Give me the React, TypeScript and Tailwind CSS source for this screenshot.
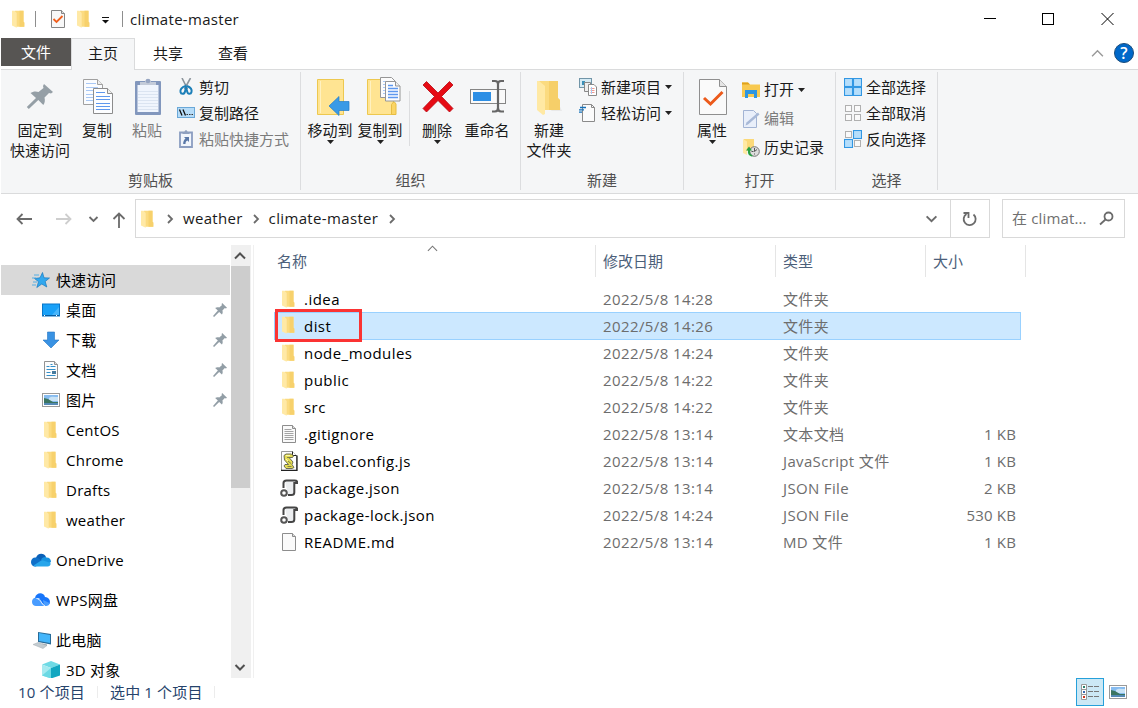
import type { ReactNode } from "react";
import clsx from "clsx";

// -------- ICONS --------

function FolderIcon() {
  return (
    <svg width="18" height="18" viewBox="0 0 18 18">
      <path d="M5 .8h8.500v11l.8.800v4.200H5z" fill="#fbdb80" />
      <path d="M9.500.8h4v11l.8.800v4.200H9.500z" fill="#f7d16c" />
      <path d="M2 .8h2.500l2.200 2.200v14.800L2 15.600z" fill="#ffe9a6" />
    </svg>
  );
}

function PinIcon({ size = 14 }: { size?: number }) {
  return (
    <svg width={size} height={size} viewBox="0 0 26 26">
      <path
        d="M17 0l9 9-2 1-2-.5-4.500 4.500c1 3 .5 5.500-1 7.500l-5-5L2 26l-2-2L9 14 4 9.500c2-1.500 5-2 7.500-1L16.500 4 16 2z"
        fill="#929ea6"
      />
    </svg>
  );
}

function BigPinIcon() {
  return (
    <svg width="40" height="38" viewBox="0 0 40 38">
      <path
        d="M24 6l9 8-2 1.500-2-.5-4.500 4.500c.8 3 .3 5.500-1.200 7.500l-5-5-9.500 9-2-2L16 20l-5.500-5c2-1.500 5.500-2 8-1L23.500 10 23 8z"
        fill="#959fa6"
      />
    </svg>
  );
}

function CopyIcon() {
  return (
    <svg width="40" height="38" viewBox="0 0 40 38">
      <path d="M6.500 1.500h14l5 5v20h-19z" fill="#fafcff" stroke="#a0a0a0" />
      <path d="M20.500 1.500v5h5" fill="#eee" stroke="#a0a0a0" />
      <path d="M9 5.500h10M9 9.500h12M9 12.500h12M9 16.500h12M9 19.500h12M9 22.500h12" stroke="#a9c8f5" />
      <path d="M16.500 10.500h14l5 5v20h-19z" fill="#fcfdff" stroke="#8c8c8c" />
      <path d="M30.500 10.500v5h5" fill="#eee" stroke="#8c8c8c" />
      <path d="M19 14.500h9M19 18.500h14M19 21.500h14M19 25.500h14M19 28.500h14M19 31.500h14" stroke="#5e98ee" strokeWidth="1.200" />
    </svg>
  );
}

function PasteIcon() {
  return (
    <svg width="40" height="38" viewBox="0 0 40 38">
      <rect x="8" y="3" width="26" height="34" rx="1" fill="#8297bd" />
      <rect x="10.500" y="7" width="21" height="27" fill="#f0f5fd" />
      <path d="M11 13.500h20M11 16.500h20M11 19.500h20M11 22.500h20M11 25.500h20M11 28.500h20M11 31.500h20" stroke="#dbe4f1" />
      <path d="M13 7V4h5c0-4 6-4 6 0h5v3z" fill="#c3cbd9" />
      <circle cx="21" cy="3" r="2.300" fill="#96a5c2" />
    </svg>
  );
}

function MoveToIcon() {
  return (
    <svg width="40" height="38" viewBox="0 0 40 38">
      <path d="M7.500 1.500h26v35h-26z" fill="#ffe492" stroke="#edc84f" />
      <path d="M10.500 3v32" stroke="#fff1c0" />
      <path d="M19 28l10-9.500v5h10v9H29v5z" fill="#3a9ae6" stroke="#227cc8" strokeWidth=".7" />
    </svg>
  );
}

function CopyToIcon() {
  return (
    <svg className="overflow-visible" width="40" height="38" viewBox="0 0 40 38">
      <path d="M7.500 1.500h26v35h-26z" fill="#ffe492" stroke="#edc84f" />
      <path d="M10.500 3v32" stroke="#fff1c0" />
      <path d="M31.500 36.500v-10l2-2.500h1l1.500 2v10.500z" fill="#fbd565" stroke="#e6bd43" />
      <path d="M20.500-.5h11l4 4v16h-15z" fill="#fcfcfc" stroke="#969696" />
      <path d="M23 3.500h5M23 6.500h4M23 9.500h4M23 12.500h4M23 15.500h4" stroke="#a9c8f5" />
      <path d="M25.500 3.500h10l4.500 4.500v15h-14.500z" fill="#fcfdff" stroke="#969696" />
      <path d="M35.500 3.500v4.500h4.500" fill="#eee" stroke="#969696" />
      <path d="M28 7.500h5M28 10.500h10M28 13.500h10M28 16.500h10M28 19.500h10" stroke="#5e98ee" strokeWidth="1.300" />
    </svg>
  );
}

function DeleteIcon() {
  return (
    <svg width="40" height="38" viewBox="0 0 40 38">
      <path
        d="M9.500 3.500l11.500 11.500 11.500-11.500 3.500 3.500L24.500 18.500 36 30.500 32.500 34 21 22.500 9.500 34 6 30.500 17.500 18.500 6 7z"
        fill="#e60b14"
        stroke="#b80710"
        strokeWidth=".8"
      />
    </svg>
  );
}

function RenameIcon() {
  return (
    <svg width="40" height="38" viewBox="0 0 40 38">
      <rect x="3.500" y="11.500" width="35" height="14" fill="#fafafa" stroke="#858585" />
      <rect x="6" y="14" width="18" height="9" fill="#2d8fe5" />
      <path
        d="M25 3h3c2 0 3 1.500 3 3v24c0 2-1 3.500-3 3.500h-3M37 3h-3c-2 0-3 1.500-3 3v24c0 2 1 3.500 3 3.500h3"
        fill="none"
        stroke="#666"
        strokeWidth="2.200"
      />
    </svg>
  );
}

function NewFolderIcon() {
  return (
    <svg width="40" height="38" viewBox="0 0 40 38">
      <path d="M28 22l5 11H22z" fill="#e9e9e9" />
      <path d="M10 3h19v17l2 2v10H14z" fill="#fbdb80" />
      <path d="M20 3h9v17l2 2v10H20z" fill="#f4cb62" opacity=".75" />
      <path d="M8 3h2l6 5v28l-2 1-6-5z" fill="#ffe9a4" />
    </svg>
  );
}

function PropertiesIcon() {
  return (
    <svg width="40" height="38" viewBox="0 0 40 38">
      <path d="M7.500 1.500h20l7 7v28h-27z" fill="#fafafa" stroke="#8f8f8f" />
      <path d="M27.500 1.500v7h7" fill="#e5e5e5" stroke="#8f8f8f" />
      <path d="M12 20l6.500 6L30.500 14" fill="none" stroke="#ec5a1b" strokeWidth="3" />
    </svg>
  );
}

function CheckedPageIcon() {
  return (
    <svg width="16" height="18" viewBox="0 0 16 18">
      <path d="M1.500.5h10l3 3v14h-13z" fill="#f8f8f8" stroke="#858585" />
      <path d="M11.500.5v3h3" fill="#ddd" stroke="#858585" />
      <path d="M3.500 9l3 3L12.500 6" fill="none" stroke="#f0601f" strokeWidth="1.800" />
    </svg>
  );
}

function CutIcon() {
  return (
    <svg width="18" height="18" viewBox="0 0 18 18" fill="none">
      <path d="M5 0l5.500 11M13.500 0L7.500 11" stroke="#8d959c" strokeWidth="1.600" />
      <path d="M10 8c4 1.500 5 4 4.500 6-.5 2.500-4 2.500-4.300-.5L9 9.500 8 13.500c-.5 3-4 3-4.500.5C3 12 4.500 9 8.500 8" stroke="#1c7fb8" strokeWidth="2" />
    </svg>
  );
}

function CopyPathIcon() {
  return (
    <svg width="18" height="18" viewBox="0 0 18 18">
      <rect x=".5" y="3.500" width="17" height="10" fill="#b6dcf8" stroke="#6aa8d8" />
      <path d="M2.500 5.500l2.500 6M6 5.500l2.500 6" stroke="#111" strokeWidth="1.300" />
      <path d="M9.500 10.500h1.500M12 10.500h1.500M14.500 10.500H16" stroke="#333" strokeWidth="1.200" />
    </svg>
  );
}

function PasteShortcutIcon() {
  return (
    <svg width="18" height="18" viewBox="0 0 18 18">
      <path d="M3 2.500h12v14.500H3z" fill="#f1f5fb" stroke="#8b9dc0" strokeWidth="1.800" />
      <path d="M5.500 4V2h2c0-2.500 3-2.500 3 0h2v2z" fill="#8fa0bf" />
      <path d="M7 7h5v5l-1.500-1.500C9 11 8.500 12 8.500 14H6.200C6 12 7 9.500 8.500 8.500z" fill="#5a78a8" />
    </svg>
  );
}

function NewItemIcon() {
  return (
    <svg width="18" height="18" viewBox="0 0 18 18">
      <rect x=".5" y=".5" width="12" height="9" fill="#d5ebf5" stroke="#7195a8" />
      <path d="M3 3h3v4H3z" fill="#3a90b8" />
      <path d="M5.500 4.500h6v9h-6z" fill="#eee" stroke="#888" />
      <path d="M9.500 6.500h5.500l2.500 2.500v8.500h-8z" fill="#fff" stroke="#8a8a8a" />
      <path d="M11.500 10.500h4M11.500 12.500h4M11.500 14.500h4" stroke="#ee9a92" />
      <path d="M12.500 9v7" stroke="#a9c8f0" />
    </svg>
  );
}

function EasyAccessIcon() {
  return (
    <svg width="18" height="18" viewBox="0 0 18 18">
      <path d="M3.500.5h9l3 3v14h-12z" fill="#fbfbfb" stroke="#8a8a8a" />
      <path d="M12.500.5v3h3" fill="none" stroke="#8a8a8a" />
      <path d="M1 3.500h6M0 5.800h5M-1 8.200h4" stroke="#1672ba" strokeWidth="1.300" />
    </svg>
  );
}

function OpenIcon() {
  return (
    <svg width="18" height="18" viewBox="0 0 18 18">
      <path d="M0 1.500h6l2 2h10V16H0z" fill="#f8c950" />
      <path d="M0 1.500h6l2 2H0z" fill="#e0a21b" />
      <path d="M3 17V9h12v8h-3v-4H6v4z" fill="#2e96e0" />
    </svg>
  );
}

function EditIcon() {
  return (
    <svg width="18" height="18" viewBox="0 0 18 18">
      <path d="M1.500.5h10l3 3v14h-13z" fill="#e9effa" stroke="#a3b4d4" />
      <path d="M3.500 15.500l1-3L16 2.500l1.500 2L6 14.500z" fill="#a8b9d7" />
    </svg>
  );
}

function HistoryIcon() {
  return (
    <svg width="18" height="18" viewBox="0 0 18 18">
      <path d="M2 0h10v12H2z" fill="#fbd979" />
      <path d="M1 0l4 2.500V16l-4-2z" fill="#ffe9a4" />
      <circle cx="12.500" cy="12.500" r="4.800" fill="#ddd" stroke="#747474" />
      <path d="M12.500 9v3.500L15 10.500M9.500 12.500h2M12.500 14.500v1" stroke="#555" fill="none" />
      <path d="M9.500 17.500c-3-1-4-3-3.500-6H4l3-4 3 4H8c0 2.500.5 4 3 5.500z" fill="#27a042" />
    </svg>
  );
}

function SelectIcon({ selected }: { selected: boolean[] }) {
  const cells = [[1, 1], [10, 1], [1, 10], [10, 10]];
  return (
    <svg width="18" height="18" viewBox="0 0 18 18">
      {cells.map(([x, y], i) =>
        selected[i] ? (
          <rect key={i} x={x - 0.5} y={y - 0.5} width="8" height="8" fill="#b5defb" stroke="#3297e3" strokeWidth="1.100" />
        ) : (
          <rect key={i} x={x + 0.5} y={y + 0.5} width="6" height="6" fill="#fafafa" stroke="#b0b0b0" />
        )
      )}
    </svg>
  );
}

function QuickAccessIcon() {
  return (
    <svg width="18" height="18" viewBox="0 0 18 18">
      <path d="M10.500 1.500l1.500 5.300 5.500.2-4.300 3.500 1.600 5.500-5-3-5 3.500 1.700-5.800L2.500 7.500l5.500-.7z" fill="#32a8ee" stroke="#1978bf" strokeWidth=".7" />
      <path d="M2 4h5M0 7h4M1 11h4M0 14h4" stroke="#45a9e5" strokeWidth=".9" />
    </svg>
  );
}

function DesktopIcon() {
  return (
    <svg width="18" height="18" viewBox="0 0 18 18">
      <rect x=".5" y="3" width="17" height="12" fill="#19a1f8" stroke="#0877c9" />
      <path d="M10 14l7-8v8z" fill="#47b5fb" />
      <path d="M1 14.500h16" stroke="#085c9e" />
      <path d="M2 14.500h1M14 14.500h1" stroke="#fff" />
    </svg>
  );
}

function DownloadIcon() {
  return (
    <svg width="18" height="18" viewBox="0 0 18 18">
      <path d="M5.500 1h7v8H17l-8 8-8-8h4.500z" fill="#3992e3" stroke="#2576c3" strokeWidth=".6" />
    </svg>
  );
}

function DocumentIcon() {
  return (
    <svg width="18" height="18" viewBox="0 0 18 18">
      <path d="M2.500.5h10l3 3v14h-13z" fill="#fcfcfc" stroke="#929292" />
      <path d="M12.500.5v3h3" fill="#ddd" stroke="#929292" />
      <path d="M4.500 5.500h3M8.500 3.500h2M8.500 5.500h5M4.500 8.500h9M4.500 11.500h4M4.500 14.500h9" stroke="#348fc9" />
      <path d="M10 10h4v3h-4z" fill="#477b9e" />
    </svg>
  );
}

function PictureIcon() {
  return (
    <svg width="18" height="18" viewBox="0 0 18 18">
      <rect x=".5" y="2.500" width="17" height="13" fill="#fff" stroke="#9a9a9a" />
      <path d="M2 4h14v10H2z" fill="#87bcf0" />
      <path d="M7 7c2-2 6-1 9-1v4H7z" fill="#c9e3f6" />
      <path d="M2 7l4 1 5 3h5v1H2z" fill="#3b7561" />
      <path d="M2 12h14v2H2z" fill="#5489b5" />
    </svg>
  );
}

function OneDriveIcon() {
  return (
    <svg width="20" height="18" viewBox="0 0 20 18">
      <path d="M5 7c1-5 8-6 10-1l-2 5-11 1z" fill="#0a60b8" />
      <path d="M0 11c0-3 2.500-5 5-4.500 2 0 4 2 5.500 3.500L5 15.500C2 16 0 13.500 0 11z" fill="#1070c9" />
      <path d="M10 8.500C12 6 14 5.500 15.500 6.500 18.500 6.500 20 8.500 20 11l-3 2z" fill="#1792df" />
      <path d="M2.500 14.500L11 9l8.500 3c.5 2-1 3.500-3 3.500H5c-1 0-2-.5-2.500-1z" fill="#28a6eb" />
    </svg>
  );
}

function WpsCloudIcon() {
  return (
    <svg width="20" height="18" viewBox="0 0 20 18">
      <path d="M4 7C5 1 13 1 14 6c4 0 6 4 4.500 7L13 15 8 7z" fill="#1775fa" />
      <path d="M1 11c0-3 2-5 5-4 3 0 5 4 7 8H5c-2 0-4-1.500-4-4z" fill="#489cff" />
      <path d="M12 9l6.500 3c0 2-1.500 3-3.500 3h-2z" fill="#489cff" />
      <path d="M5.500 7.500c4 0 4.500 5.500 8.500 7.500" fill="none" stroke="#fff" strokeWidth=".9" />
    </svg>
  );
}

function ComputerIcon() {
  return (
    <svg width="20" height="18" viewBox="0 0 20 18">
      <path d="M7 1l13 2v10.500L7 11z" fill="#286b98" />
      <path d="M8 2l11 2v8L8 10z" fill="#43b5fa" />
      <path d="M11 12.500l5 1v1.500l-5-1z" fill="#98a2a8" />
      <path d="M2 13.500l5-2 9 3-4 3z" fill="#c3ccd1" stroke="#a5adb3" strokeWidth=".5" />
    </svg>
  );
}

function ObjectsIcon() {
  return (
    <svg width="18" height="18" viewBox="0 0 18 18">
      <path d="M9 0l9 3.500L9 7 0 3.500z" fill="#6fdae5" />
      <path d="M0 3.500L9 7v10.500l-9-3z" fill="#a5eaf0" />
      <path d="M9 7l9-3.500v11l-9 3z" fill="#12a7c1" />
      <path d="M9 7L0 14.500l9 3z" fill="#6bd9e4" />
    </svg>
  );
}

function PageIcon({ lines = false }: { lines?: boolean }) {
  return (
    <svg width="18" height="18" viewBox="0 0 18 18">
      <path d="M2.500.5h10l3 3v14h-13z" fill="#fafafa" stroke="#8d8d8d" />
      <path d="M12.500.5v3h3" fill="#ddd" stroke="#8d8d8d" />
      {lines && <path d="M4.500 4.500h7M4.500 6.500h9M4.500 8.500h9M4.500 10.500h9M4.500 12.500h9M4.500 14.500h9" stroke="#a4a4a4" />}
    </svg>
  );
}

function ScriptIcon() {
  return (
    <svg width="18" height="20" viewBox="0 0 18 20">
      <path d="M1.500.5h11l4 4v15h-15z" fill="#fdfdfd" stroke="#999" />
      <path d="M17 4.500v15H1" fill="none" stroke="#222" strokeWidth="1.300" />
      <path d="M12.500.5v4h4" fill="#fff" stroke="#222" />
      <path d="M4 4.500L6 3h5.500l2 2-1 1.500H9l4 4.500-1 2.500 2 3-2 1H6l-2-2.500 1-1.500h3.500l-4-4.500z" fill="#e4dc52" stroke="#606048" strokeWidth=".9" />
      <path d="M7 6.500h4M8 10l3 2.500M7.500 15.500h4" stroke="#77774a" strokeWidth=".9" />
      <path d="M6 4.500h4M6 8l2 2" stroke="#faf7b0" />
    </svg>
  );
}

function JsonIcon() {
  return (
    <svg width="18" height="18" viewBox="0 0 18 18">
      <path d="M5 2h9v14H8z" fill="#eceef0" />
      <path d="M3.500 9V4c0-2 1-2.500 3-2.500h8c2 0 3 .5 3 2.500h-3.200v9.500c0 1.500-1 2.500-3 2.500H8" fill="none" stroke="#454545" strokeWidth="2" />
      <circle cx="4" cy="14" r="2.800" fill="#fff" stroke="#555" strokeWidth="2" />
    </svg>
  );
}

function Chevron({ d, size = 12, color = "#6b6b6b", width = 1.8 }: { d: string; size?: number; color?: string; width?: number }) {
  return (
    <svg width={size} height={size} viewBox="0 0 12 12" fill="none" stroke={color} strokeWidth={width}>
      <path d={d} />
    </svg>
  );
}

const UP = "M1 8.500l5-5 5 5";
const DOWN = "M1.500 4l4.500 4.500L10.500 4";
const RIGHT = "M4 2l4 4-4 4";

function Caret() {
  return (
    <svg width="7" height="4" viewBox="0 0 7 4">
      <path d="M0 0h7L3.500 4z" fill="#222" />
    </svg>
  );
}

// -------- RIBBON --------

interface BigButtonProps {
  icon: ReactNode;
  label: string;
  second?: string;
  caret?: boolean;
  disabled?: boolean;
  className?: string;
}

function BigButton({ icon, label, second, caret, disabled, className = "w-[50px]" }: BigButtonProps) {
  return (
    <button className={clsx("flex shrink-0 flex-col items-center whitespace-nowrap leading-5", className, disabled && "text-[#7b7b7b]")}>
      <span className="mt-2 mb-1 h-[38px]">{icon}</span>
      <span>{label}</span>
      {second && <span>{second}</span>}
      {caret && <Caret />}
    </button>
  );
}

interface SmallButtonProps {
  icon: ReactNode;
  label: string;
  caret?: boolean;
  disabled?: boolean;
  className?: string;
}

function SmallButton({ icon, label, caret, disabled, className = "h-[26px]" }: SmallButtonProps) {
  return (
    <button className={clsx("flex items-center gap-1 whitespace-nowrap", className, disabled && "text-[#7b7b7b]")}>
      {icon}
      <span>{label}</span>
      {caret && <Caret />}
    </button>
  );
}

interface RibbonGroupProps {
  title: string;
  className: string;
  inner: string;
  children: ReactNode;
}

function RibbonGroup({ title, className, inner, children }: RibbonGroupProps) {
  return (
    <section className={clsx("mt-0.5 flex h-[118px] shrink-0 flex-col border-r border-[#dcdddf]", className)}>
      <div className={clsx("-mt-0.5 flex h-[100px] items-start", inner)}>{children}</div>
      <div className="text-center leading-5 text-[#505050]">{title}</div>
    </section>
  );
}

function Ribbon() {
  return (
    <div className="flex h-[124px] shrink-0 border-b border-[#dadbdc] bg-[#f5f6f7]">
      <RibbonGroup title="剪贴板" className="w-[300px]" inner="pl-[7px]">
        <BigButton icon={<BigPinIcon />} label="固定到" second="快速访问" className="w-16" />
        <BigButton icon={<CopyIcon />} label="复制" />
        <BigButton icon={<PasteIcon />} label="粘贴" disabled />
        <div className="mt-1 ml-[5px]">
          <SmallButton icon={<CutIcon />} label="剪切" />
          <SmallButton icon={<CopyPathIcon />} label="复制路径" />
          <SmallButton icon={<PasteShortcutIcon />} label="粘贴快捷方式" disabled />
        </div>
      </RibbonGroup>

      <RibbonGroup title="组织" className="w-[220px]" inner="pl-1">
        <BigButton icon={<MoveToIcon />} label="移动到" caret />
        <BigButton icon={<CopyToIcon />} label="复制到" caret />
        <div className="mt-[21px] mr-0.5 ml-1 h-[55px] w-px bg-[#dcdddf]" />
        <BigButton icon={<DeleteIcon />} label="删除" caret />
        <BigButton icon={<RenameIcon />} label="重命名" />
      </RibbonGroup>

      <RibbonGroup title="新建" className="w-[163px]" inner="pl-[3px]">
        <BigButton icon={<NewFolderIcon />} label="新建" second="文件夹" />
        <div className="mt-1 ml-[5px]">
          <SmallButton icon={<NewItemIcon />} label="新建项目" caret />
          <SmallButton icon={<EasyAccessIcon />} label="轻松访问" caret />
        </div>
      </RibbonGroup>

      <RibbonGroup title="打开" className="w-[152px]" inner="pl-[3px]">
        <BigButton icon={<PropertiesIcon />} label="属性" caret />
        <div className="mt-[5px] ml-[5px]">
          <SmallButton icon={<OpenIcon />} label="打开" caret className="h-[29px]" />
          <SmallButton icon={<EditIcon />} label="编辑" disabled className="h-[29px]" />
          <SmallButton icon={<HistoryIcon />} label="历史记录" className="h-[29px]" />
        </div>
      </RibbonGroup>

      <RibbonGroup title="选择" className="w-[102px]" inner="pl-2">
        <div className="mt-1">
          <SmallButton icon={<SelectIcon selected={[true, true, true, true]} />} label="全部选择" />
          <SmallButton icon={<SelectIcon selected={[false, false, false, false]} />} label="全部取消" />
          <SmallButton icon={<SelectIcon selected={[false, true, true, false]} />} label="反向选择" />
        </div>
      </RibbonGroup>
    </div>
  );
}

// -------- TITLE, TABS AND ADDRESS --------

function TitleBar() {
  return (
    <header className="flex h-[38px] shrink-0 items-center">
      <div className="ml-[9px] flex items-center"><FolderIcon /></div>
      <div className="ml-[7px] h-4 w-px bg-[#8e8e8e]" />
      <div className="ml-[14px]"><CheckedPageIcon /></div>
      <div className="ml-[9px]"><FolderIcon /></div>
      <svg className="mt-0.5 ml-[9px]" width="7" height="7" viewBox="0 0 7 7">
        <path d="M0 .5h7" stroke="#111" />
        <path d="M0 3h7L3.500 6.500z" fill="#111" />
      </svg>
      <div className="ml-[13px] h-4 w-px bg-[#8e8e8e]" />
      <h1 className="ml-[7px] tracking-[0.3px]">climate-master</h1>
      <svg className="mr-6 ml-auto" width="130" height="14" viewBox="0 0 130 14" fill="none" stroke="#000">
        <path d="M0 6.500h12M117.500 1l12 12M129.500 1l-12 12" />
        <rect x="58.500" y="1.500" width="11" height="11" />
      </svg>
    </header>
  );
}

function Tabs() {
  return (
    <nav className="flex h-8 shrink-0 border-b border-[#dadbdc] leading-[30px]">
      <div className="h-7 w-[70px] bg-[#575553] text-center leading-7 text-white">文件</div>
      <div className="h-8 w-16 border-x border-t border-[#dadbdc] bg-[#f5f6f7] text-center leading-7">主页</div>
      <div className="w-[66px] text-center">共享</div>
      <div className="w-16 text-center">查看</div>
      <div className="mt-px mr-1 ml-auto flex h-7 items-center gap-2.5">
        <Chevron d={UP} size={13} color="#999" width={1.3} />
        <span className="flex size-5 items-center justify-center rounded-full border border-[#1b4d7c] bg-[#0068c9] text-base leading-none font-semibold text-white">?</span>
      </div>
    </nav>
  );
}

function AddressBar() {
  return (
    <div className="mt-[5px] flex h-[39px] shrink-0 items-center">
      <div className="flex w-[134px] shrink-0 items-center">
        <svg width="134" height="20" viewBox="0 0 134 20" fill="none" stroke="#6b6b6b" strokeWidth="1.800">
          <path d="M31 10H16.500M21.500 5l-5 5 5 5" />
          <path d="M55 10h14.500M64.500 5l5 5-5 5" stroke="#cecece" />
          <path d="M88.500 8l4 4 4-4" />
          <path d="M118 19V5M112.500 10l5.500-5.500 5.500 5.500" />
        </svg>
      </div>
      <div className="flex h-full w-[816px] items-center border border-[#d9d9d9] pl-[3px]">
        <FolderIcon />
        <span className="ml-[7px]"><Chevron d={RIGHT} /></span>
        <span className="ml-[7px] tracking-[0.3px]">weather</span>
        <span className="ml-[7px]"><Chevron d={RIGHT} /></span>
        <span className="ml-[7px] tracking-[0.35px]">climate-master</span>
        <span className="ml-2"><Chevron d={RIGHT} /></span>
        <span className="mr-3 ml-auto"><Chevron d={DOWN} size={13} /></span>
      </div>
      <div className="-ml-px flex h-full w-10 items-center justify-center border border-[#d9d9d9]">
        <svg width="16" height="16" viewBox="0 0 16 16" fill="none" stroke="#6b6b6b" strokeWidth="1.800">
          <path d="M11.500 3.500A6 6 0 1 1 4.500 3M1.500 2h5v5" />
        </svg>
      </div>
      <div className="ml-3 flex h-full w-[123px] items-center border border-[#d9d9d9] pl-[9px] text-[#707070]">
        <span className="whitespace-nowrap tracking-[0.15px]">在 climat...</span>
        <svg className="mr-2.5 ml-auto" width="15" height="15" viewBox="0 0 15 15" fill="none" stroke="#6b6b6b" strokeWidth="1.800">
          <circle cx="9.500" cy="5.500" r="4" />
          <path d="M6.500 8.500l-5.500 5" />
        </svg>
      </div>
    </div>
  );
}

// -------- NAVIGATION PANE --------

interface NavItem {
  label: string;
  icon: ReactNode;
  top?: boolean;
  pinned?: boolean;
  selected?: boolean;
}

const navItems: NavItem[] = [
  { label: "快速访问", icon: <QuickAccessIcon />, top: true, selected: true },
  { label: "桌面", icon: <DesktopIcon />, pinned: true },
  { label: "下载", icon: <DownloadIcon />, pinned: true },
  { label: "文档", icon: <DocumentIcon />, pinned: true },
  { label: "图片", icon: <PictureIcon />, pinned: true },
  { label: "CentOS", icon: <FolderIcon /> },
  { label: "Chrome", icon: <FolderIcon /> },
  { label: "Drafts", icon: <FolderIcon /> },
  { label: "weather", icon: <FolderIcon /> },
  { label: "OneDrive", icon: <OneDriveIcon />, top: true },
  { label: "WPS网盘", icon: <WpsCloudIcon />, top: true },
  { label: "此电脑", icon: <ComputerIcon />, top: true },
  { label: "3D 对象", icon: <ObjectsIcon /> },
];

function NavPane() {
  return (
    <aside className="flex w-[253px] shrink-0 border-r border-[#f0f0f0] text-black">
      <div className="w-[230px] overflow-hidden pt-5">
        {navItems.map((item) => (
          <div
            key={item.label}
            className={clsx(
              "flex h-[30px] items-center leading-4 tracking-[0.25px]",
              item.top ? "pl-[30px]" : "pl-[41px]",
              item.top && !item.selected && "mt-2.5",
              item.selected && "mr-px bg-[#d9d9d9] tracking-normal"
            )}
          >
            <span className={clsx("flex justify-center", item.top ? "w-5" : "w-[18px]")}>{item.icon}</span>
            <span className={item.top ? "ml-[5px]" : "ml-1.5"}>{item.label}</span>
            {item.pinned && <span className="mr-1 ml-auto"><PinIcon /></span>}
          </div>
        ))}
      </div>
      <div className="flex w-5 flex-col bg-[#f0f0f0]">
        <div className="flex h-[21px] items-center pl-[3px]"><Chevron d={UP} color="#505050" width={2} /></div>
        <div className="h-[222px] w-[19px] bg-[#cdcdcd]" />
        <div className="mt-auto flex h-[23px] items-center pl-[3px]"><Chevron d={DOWN} color="#505050" width={2} /></div>
      </div>
    </aside>
  );
}

// -------- FILE LIST --------

interface FileEntry {
  name: string;
  date: string;
  type: string;
  size?: string;
  icon: ReactNode;
}

const files: FileEntry[] = [
  { name: ".idea", date: "2022/5/8 14:28", type: "文件夹", icon: <FolderIcon /> },
  { name: "dist", date: "2022/5/8 14:26", type: "文件夹", icon: <FolderIcon /> },
  { name: "node_modules", date: "2022/5/8 14:24", type: "文件夹", icon: <FolderIcon /> },
  { name: "public", date: "2022/5/8 14:22", type: "文件夹", icon: <FolderIcon /> },
  { name: "src", date: "2022/5/8 14:22", type: "文件夹", icon: <FolderIcon /> },
  { name: ".gitignore", date: "2022/5/8 13:14", type: "文本文档", size: "1 KB", icon: <PageIcon lines /> },
  { name: "babel.config.js", date: "2022/5/8 13:14", type: "JavaScript 文件", size: "1 KB", icon: <ScriptIcon /> },
  { name: "package.json", date: "2022/5/8 13:14", type: "JSON File", size: "2 KB", icon: <JsonIcon /> },
  { name: "package-lock.json", date: "2022/5/8 14:24", type: "JSON File", size: "530 KB", icon: <JsonIcon /> },
  { name: "README.md", date: "2022/5/8 13:14", type: "MD 文件", size: "1 KB", icon: <PageIcon /> },
];

function FileRow({ file, selected }: { file: FileEntry; selected: boolean }) {
  return (
    <div
      className={clsx(
        "relative ml-5 flex w-[747px] items-center border-x text-[#6d6d6d]",
        selected ? "-mt-px h-7 border-y border-[#99d1ff] bg-[#cce8ff]" : "h-[27px] border-transparent"
      )}
    >
      <span className="-mt-0.5 flex w-[29px] justify-start pl-[5px]">{file.icon}</span>
      <span className="w-[299px] tracking-[0.45px] text-black">{file.name}</span>
      <span className="w-[180px] tracking-[0.4px]">{file.date}</span>
      <span className="w-[150px] tracking-[0.35px]">{file.type}</span>
      <span className="w-[83px] text-right tracking-[0.15px]">{file.size}</span>
      {/* marker around the build output */}
      {selected && <span className="absolute -top-1 left-0 h-[33px] w-[87px] border-3 border-[#fb3333]" />}
    </div>
  );
}

function FileList() {
  return (
    <main className="min-w-0 flex-1">
      <div className="relative mb-[9px] flex h-8 items-center leading-8 text-[#4c607a]">
        <span className="w-[342px] border-r border-[#e5e5e5] pl-[23px]">名称</span>
        <span className="w-[180px] border-r border-[#e5e5e5] pl-[7px]">修改日期</span>
        <span className="w-[150px] border-r border-[#e5e5e5] pl-[7px]">类型</span>
        <span className="w-[100px] border-r border-[#e5e5e5] pl-[7px]">大小</span>
        <span className="absolute -top-0.5 left-[173px]"><Chevron d={UP} size={11} color="#777" width={1.2} /></span>
      </div>
      {files.map((file) => (
        <FileRow key={file.name} file={file} selected={file.name === "dist"} />
      ))}
    </main>
  );
}

// -------- STATUS BAR --------

function StatusBar() {
  return (
    <footer className="flex h-[30px] shrink-0 items-start leading-7 tracking-[0.15px] text-[#26436b]">
      <span className="ml-[17px] w-[79px]">10 个项目</span>
      <span className="mt-2 h-3 w-px bg-[#ececec]" />
      <span className="w-[116px] pl-3">选中 1 个项目</span>
      <span className="mt-2 h-3 w-px bg-[#ececec]" />
      <div className="mr-[11px] ml-auto flex items-center gap-[5px]">
        <span className="flex size-7 items-center justify-center border border-[#26a0da] bg-[#cce8f5]">
          <svg width="18" height="18" viewBox="0 0 18 18">
            <path d="M.5 1.500h5v15h-5zM.5 6.500h5M.5 11.500h5" fill="#fff" stroke="#999" />
            <path d="M2 4h2" stroke="#28806e" strokeWidth="2" />
            <path d="M2 9h2" stroke="#386ab1" strokeWidth="2" />
            <path d="M2 14h2" stroke="#ce331c" strokeWidth="2" />
            <path d="M7 3.500h5M13 3.500h5M7 8.500h5M13 8.500h5M7 13.500h5M13 13.500h5" stroke="#777" />
          </svg>
        </span>
        <PictureIcon />
      </div>
    </footer>
  );
}

export default function App() {
  return (
    <div className="flex h-[708px] w-[1138px] flex-col overflow-hidden bg-white pl-px font-['Open_Sans','Noto_Sans_CJK_SC',sans-serif] text-[15px] text-[#1a1a1a]">
      <TitleBar />
      <Tabs />
      <Ribbon />
      <AddressBar />
      <div className="mt-[7px] flex min-h-0 flex-1">
        <NavPane />
        <FileList />
      </div>
      <StatusBar />
    </div>
  );
}
